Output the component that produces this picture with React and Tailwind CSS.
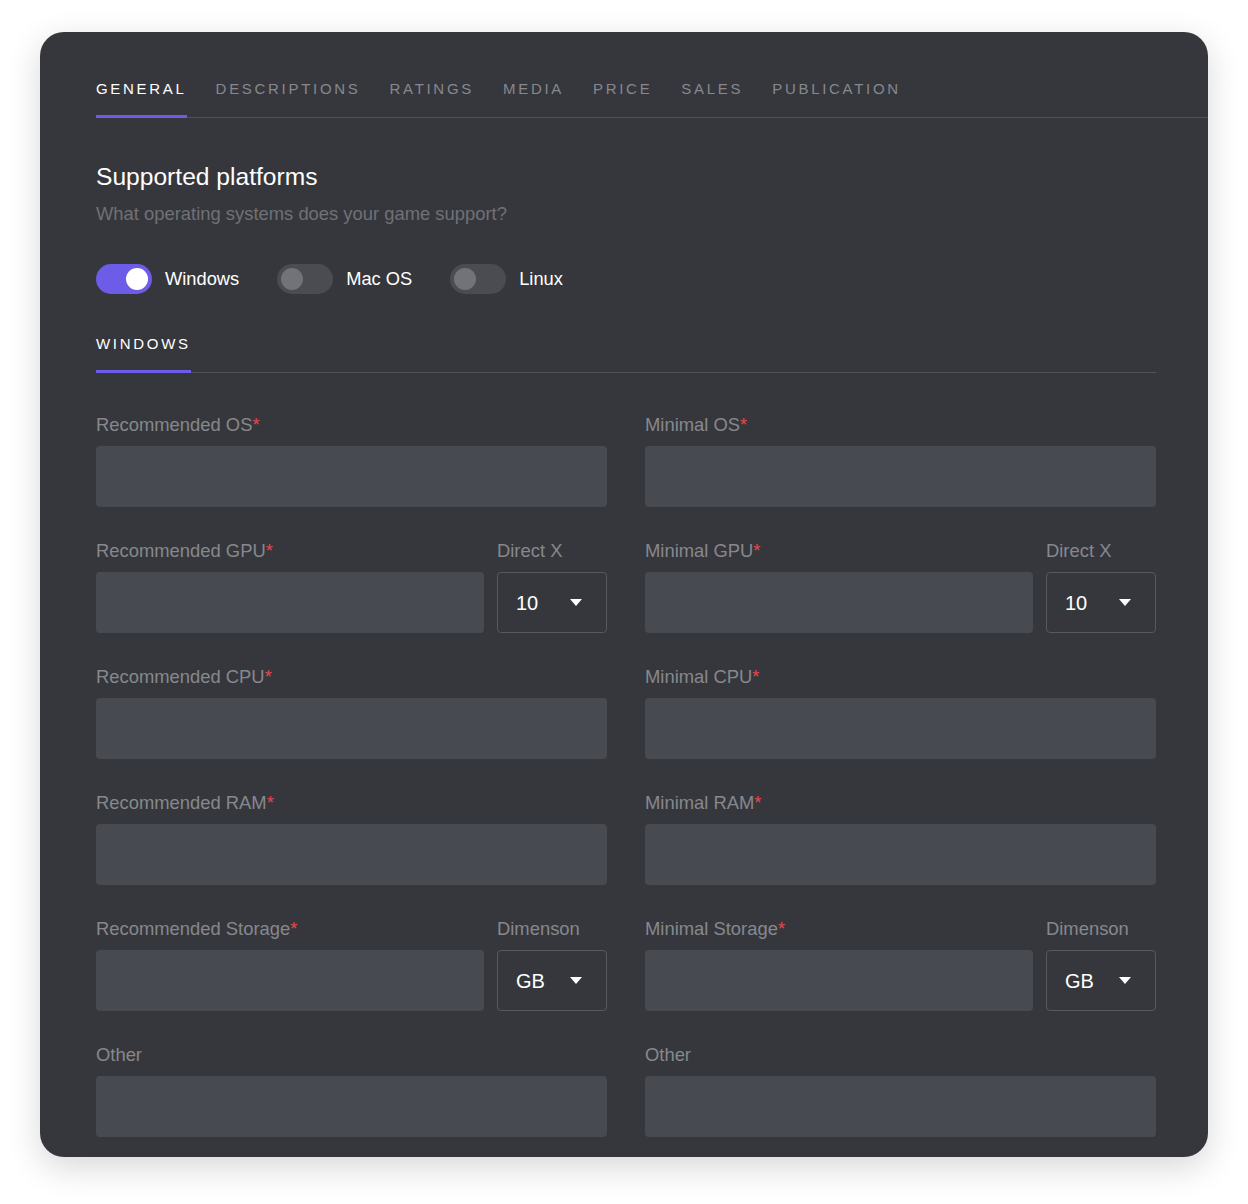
import { useState } from "react";

const tabs = ["General", "Descriptions", "Ratings", "Media", "Price", "Sales", "Publication"];

function Toggle({ on, label, onChange }) {
  return (
    <button onClick={onChange} className="flex items-center gap-[13px]">
      <span
        className={`flex h-[30px] w-[56px] items-center rounded-full px-[4px] ${
          on ? "justify-end bg-[#6c5ce7]" : "justify-start bg-[#4a4c52]"
        }`}
      >
        <span
          className={`h-[22px] w-[22px] rounded-full ${on ? "bg-white" : "bg-[#717379]"}`}
        />
      </span>
      <span className="text-[18.3px] leading-[22px] text-white">{label}</span>
    </button>
  );
}

function Label({ children, required }) {
  return (
    <div className="mb-[10px] text-[18.4px] leading-[22px] text-[#86888e]">
      {children}
      {required && <span className="text-[#e5484d]">*</span>}
    </div>
  );
}

function Input() {
  return <div className="h-[61px] rounded-[4px] bg-[#484a51]" />;
}

function Select({ value }) {
  return (
    <div className="flex h-[61px] items-center justify-between rounded-[4px] border border-[#57595f] pl-[18px] pr-[24px]">
      <span className="text-[20px] text-white">{value}</span>
      <svg width="12" height="7" viewBox="0 0 12 7">
        <path d="M0 0h12L6 7z" fill="#fff" />
      </svg>
    </div>
  );
}

function Field({ label, required = true }) {
  return (
    <div>
      <Label required={required}>{label}</Label>
      <Input />
    </div>
  );
}

function FieldWithSelect({ label, selLabel, value }) {
  return (
    <div className="flex gap-[13px]">
      <div className="flex-1">
        <Label required>{label}</Label>
        <Input />
      </div>
      <div className="w-[110px]">
        <Label>{selLabel}</Label>
        <Select value={value} />
      </div>
    </div>
  );
}

export default function App() {
  const [active, setActive] = useState(0);
  const [platforms, setPlatforms] = useState({ windows: true, mac: false, linux: false });

  const flip = (k) => setPlatforms({ ...platforms, [k]: !platforms[k] });

  return (
    <div
      className="min-h-[1204px] bg-white px-[40px] pt-[32px]"
      style={{ fontFamily: '"Liberation Sans", Arial, sans-serif' }}
    >
      <div className="rounded-[24px] bg-[#36373c] pb-[20px] pl-[56px] pt-[48px] shadow-[0_10px_34px_rgba(0,0,0,0.16)]">
        <div className="flex gap-[29px] border-b border-[#505258]">
          {tabs.map((t, i) => (
            <button
              key={t}
              onClick={() => setActive(i)}
              className={`-mb-px border-b-[3px] pb-[17px] text-[15px] uppercase leading-[18px] tracking-[0.18em] ${
                active === i ? "border-[#6c5ce7] text-white" : "border-transparent text-[#86888e]"
              }`}
            >
              {t}
            </button>
          ))}
        </div>

        <div className="pr-[52px]">
          <h2 className="mt-[45px] text-[24.6px] leading-[28px] text-white">Supported platforms</h2>
          <p className="mt-[12px] text-[18.4px] leading-[22px] text-[#6f7177]">
            What operating systems does your game support?
          </p>

          <div className="mt-[39px] flex gap-[38px]">
            <Toggle on={platforms.windows} label="Windows" onChange={() => flip("windows")} />
            <Toggle on={platforms.mac} label="Mac OS" onChange={() => flip("mac")} />
            <Toggle on={platforms.linux} label="Linux" onChange={() => flip("linux")} />
          </div>

          <div className="mt-[38px] border-b border-[#505258]">
            <div className="-mb-px inline-block border-b-[3px] border-[#6c5ce7] pb-[17px] text-[15px] uppercase leading-[18px] tracking-[0.18em] text-white">
              Windows
            </div>
          </div>

          <div className="mt-[41px] grid grid-cols-2 gap-x-[38px] gap-y-[33px]">
            <Field label="Recommended OS" />
            <Field label="Minimal OS" />
            <FieldWithSelect label="Recommended GPU" selLabel="Direct X" value="10" />
            <FieldWithSelect label="Minimal GPU" selLabel="Direct X" value="10" />
            <Field label="Recommended CPU" />
            <Field label="Minimal CPU" />
            <Field label="Recommended RAM" />
            <Field label="Minimal RAM" />
            <FieldWithSelect label="Recommended Storage" selLabel="Dimenson" value="GB" />
            <FieldWithSelect label="Minimal Storage" selLabel="Dimenson" value="GB" />
            <Field label="Other" required={false} />
            <Field label="Other" required={false} />
          </div>
        </div>
      </div>
    </div>
  );
}
